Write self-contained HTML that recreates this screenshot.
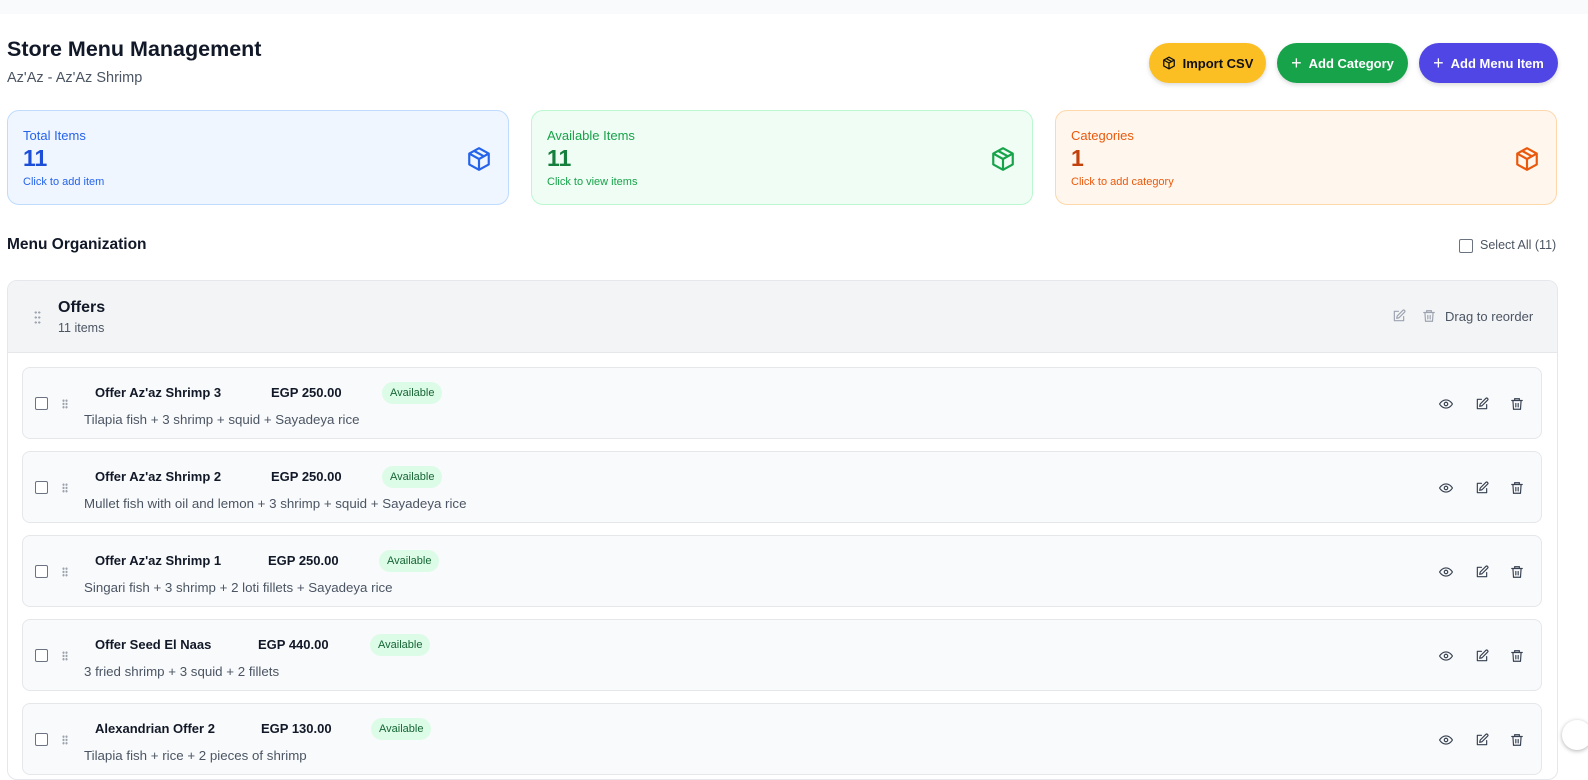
<!DOCTYPE html>
<html><head><meta charset="utf-8"><style>
*{box-sizing:border-box;margin:0;padding:0}
body{width:1588px;height:767px;overflow:hidden;background:#fff;font-family:"Liberation Sans",Arial,sans-serif;position:relative;color:#111827}
.abs{position:absolute}
.btn{position:absolute;top:43px;height:40px;border-radius:20px;font-size:13px;font-weight:bold;display:flex;align-items:center;justify-content:center;gap:7px;box-shadow:0 2px 5px rgba(0,0,0,.15)}
.card{position:absolute;top:110px;width:502px;height:95px;border-radius:12px;border:1px solid}
.card .t{position:absolute;left:15px;top:17px;font-size:13px}
.card .n{position:absolute;left:15px;top:34px;font-size:23px;font-weight:bold}
.card .s{position:absolute;left:15px;top:65px;font-size:11px}
.card svg{position:absolute;right:16px;top:35px}
.item{position:absolute;left:22px;width:1520px;height:72px;background:#f9fafb;border:1px solid #e5e7eb;border-radius:8px}
.cb{position:absolute;width:13px;height:13px;border:1.5px solid #6b7280;border-radius:2px;background:#fff}
.item .nm{position:absolute;top:17px;font-size:13px;font-weight:bold;color:#111827}
.item .pr{position:absolute;top:17px;font-size:13px;font-weight:bold;color:#111827}
.badge{position:absolute;top:14px;height:22px;padding:0 8px;border-radius:11px;background:#dcfce7;color:#166534;font-size:11px;line-height:22px}
.item .ds{position:absolute;left:61px;top:44px;font-size:13.3px;color:#4b5563}
.dots{position:absolute;width:6px;height:10px;background:radial-gradient(circle,#9ca3af 1px,transparent 1.3px) 0 0/3px 3.3px}
.ic{position:absolute;top:29px}
</style></head><body>
<div class="abs" style="left:0;top:0;width:1588px;height:14px;background:#f8fafc"></div>
<div class="abs" style="left:7px;top:37px;font-size:21.5px;font-weight:bold">Store Menu Management</div>
<div class="abs" style="left:7px;top:70px;font-size:14.5px;color:#4b5563">Az'Az - Az'Az Shrimp</div>

<div class="btn" style="left:1149px;width:117px;background:#fbbf24;color:#111">
<svg width="14" height="14" viewBox="0 0 24 24" fill="none" stroke="#111" stroke-width="2.2" stroke-linejoin="round"><path d="M12 2l9 5v10l-9 5-9-5V7z"/><path d="M3 7l9 5 9-5M12 12v10M7.5 4.5l9 5"/></svg>Import CSV</div>
<div class="btn" style="left:1277px;width:131px;background:#16a34a;color:#fff"><span style="font-size:18px;font-weight:normal">+</span>Add Category</div>
<div class="btn" style="left:1419px;width:139px;background:#4f46e5;color:#fff"><span style="font-size:18px;font-weight:normal">+</span>Add Menu Item</div>

<div class="card" style="left:7px;background:#eff6ff;border-color:#bfdbfe;color:#2563eb"><div class="t">Total Items</div><div class="n" style="color:#1d4ed8">11</div><div class="s">Click to add item</div>
<svg width="26" height="26" viewBox="0 0 24 24" fill="none" stroke="#2563eb" stroke-width="2" stroke-linejoin="round"><path d="M12 2l9 5v10l-9 5-9-5V7z"/><path d="M3 7l9 5 9-5M12 12v10M7.5 4.5l9 5"/></svg></div>
<div class="card" style="left:531px;background:#f0fdf4;border-color:#bbf7d0;color:#16a34a"><div class="t">Available Items</div><div class="n" style="color:#15803d">11</div><div class="s">Click to view items</div>
<svg width="26" height="26" viewBox="0 0 24 24" fill="none" stroke="#16a34a" stroke-width="2" stroke-linejoin="round"><path d="M12 2l9 5v10l-9 5-9-5V7z"/><path d="M3 7l9 5 9-5M12 12v10M7.5 4.5l9 5"/></svg></div>
<div class="card" style="left:1055px;background:#fff7ed;border-color:#fed7aa;color:#ea580c"><div class="t">Categories</div><div class="n" style="color:#c2410c">1</div><div class="s">Click to add category</div>
<svg width="26" height="26" viewBox="0 0 24 24" fill="none" stroke="#ea580c" stroke-width="2" stroke-linejoin="round"><path d="M12 2l9 5v10l-9 5-9-5V7z"/><path d="M3 7l9 5 9-5M12 12v10M7.5 4.5l9 5"/></svg></div>

<div class="abs" style="left:7px;top:236px;font-size:15.5px;font-weight:bold">Menu Organization</div>
<div class="cb" style="left:1459px;top:239px;width:14px;height:14px;border-color:#6b7280"></div>
<div class="abs" style="left:1480px;top:238px;font-size:12.5px;color:#4b5563">Select All (11)</div>

<div class="abs" style="left:7px;top:280px;width:1551px;height:500px;border:1px solid #e5e7eb;border-radius:10px;overflow:hidden">
<div style="height:72px;background:#f3f4f6;border-bottom:1px solid #e5e7eb;position:relative">
<div class="dots" style="left:26px;top:29px;width:7px;height:15px;background-size:3.5px 5px"></div>
<div class="abs" style="left:50px;top:18px;font-size:16px;font-weight:bold">Offers</div>
<div class="abs" style="left:50px;top:40px;font-size:12.5px;color:#4b5563">11 items</div>
<svg class="abs" style="left:1384px;top:28px" width="14" height="14" viewBox="0 0 24 24" fill="none" stroke="#9ca3af" stroke-width="2" stroke-linecap="round" stroke-linejoin="round"><path d="M11 4H4v16h16v-7"/><path d="M18.5 2.5a2.1 2.1 0 013 3L12 15l-4 1 1-4z"/></svg>
<svg class="abs" style="left:1414px;top:28px" width="14" height="14" viewBox="0 0 24 24" fill="none" stroke="#9ca3af" stroke-width="2" stroke-linecap="round"><path d="M3 6h18M8 6V3h8v3M5 6l1 15h12l1-15M10 11v6M14 11v6"/></svg>
<div class="abs" style="left:1437px;top:28px;font-size:13px;color:#4b5563">Drag to reorder</div>
</div>
</div>

<div class="item" style="top:367px"><div class="cb" style="left:12px;top:29px"></div><div class="dots" style="left:39px;top:31px"></div><div class="nm" style="left:72px">Offer Az'az Shrimp 3</div><div class="pr" style="left:248px">EGP 250.00</div><div class="badge" style="left:359px">Available</div><div class="ds">Tilapia fish + 3 shrimp + squid + Sayadeya rice</div>
<svg class="ic" style="left:1415px" width="16" height="14" viewBox="0 0 24 24" fill="none" stroke="#374151" stroke-width="2"><path d="M1 12s4-7 11-7 11 7 11 7-4 7-11 7S1 12 1 12z"/><circle cx="12" cy="12" r="3"/></svg>
<svg class="ic" style="left:1452px" width="14" height="14" viewBox="0 0 24 24" fill="none" stroke="#374151" stroke-width="2" stroke-linecap="round" stroke-linejoin="round"><path d="M11 4H4v16h16v-7"/><path d="M18.5 2.5a2.1 2.1 0 013 3L12 15l-4 1 1-4z"/></svg>
<svg class="ic" style="left:1487px" width="14" height="14" viewBox="0 0 24 24" fill="none" stroke="#374151" stroke-width="2" stroke-linecap="round"><path d="M3 6h18M8 6V3h8v3M5 6l1 15h12l1-15M10 11v6M14 11v6"/></svg></div>

<div class="item" style="top:451px"><div class="cb" style="left:12px;top:29px"></div><div class="dots" style="left:39px;top:31px"></div><div class="nm" style="left:72px">Offer Az'az Shrimp 2</div><div class="pr" style="left:248px">EGP 250.00</div><div class="badge" style="left:359px">Available</div><div class="ds">Mullet fish with oil and lemon + 3 shrimp + squid + Sayadeya rice</div>
<svg class="ic" style="left:1415px" width="16" height="14" viewBox="0 0 24 24" fill="none" stroke="#374151" stroke-width="2"><path d="M1 12s4-7 11-7 11 7 11 7-4 7-11 7S1 12 1 12z"/><circle cx="12" cy="12" r="3"/></svg>
<svg class="ic" style="left:1452px" width="14" height="14" viewBox="0 0 24 24" fill="none" stroke="#374151" stroke-width="2" stroke-linecap="round" stroke-linejoin="round"><path d="M11 4H4v16h16v-7"/><path d="M18.5 2.5a2.1 2.1 0 013 3L12 15l-4 1 1-4z"/></svg>
<svg class="ic" style="left:1487px" width="14" height="14" viewBox="0 0 24 24" fill="none" stroke="#374151" stroke-width="2" stroke-linecap="round"><path d="M3 6h18M8 6V3h8v3M5 6l1 15h12l1-15M10 11v6M14 11v6"/></svg></div>

<div class="item" style="top:535px"><div class="cb" style="left:12px;top:29px"></div><div class="dots" style="left:39px;top:31px"></div><div class="nm" style="left:72px">Offer Az'az Shrimp 1</div><div class="pr" style="left:245px">EGP 250.00</div><div class="badge" style="left:356px">Available</div><div class="ds">Singari fish + 3 shrimp + 2 loti fillets + Sayadeya rice</div>
<svg class="ic" style="left:1415px" width="16" height="14" viewBox="0 0 24 24" fill="none" stroke="#374151" stroke-width="2"><path d="M1 12s4-7 11-7 11 7 11 7-4 7-11 7S1 12 1 12z"/><circle cx="12" cy="12" r="3"/></svg>
<svg class="ic" style="left:1452px" width="14" height="14" viewBox="0 0 24 24" fill="none" stroke="#374151" stroke-width="2" stroke-linecap="round" stroke-linejoin="round"><path d="M11 4H4v16h16v-7"/><path d="M18.5 2.5a2.1 2.1 0 013 3L12 15l-4 1 1-4z"/></svg>
<svg class="ic" style="left:1487px" width="14" height="14" viewBox="0 0 24 24" fill="none" stroke="#374151" stroke-width="2" stroke-linecap="round"><path d="M3 6h18M8 6V3h8v3M5 6l1 15h12l1-15M10 11v6M14 11v6"/></svg></div>

<div class="item" style="top:619px"><div class="cb" style="left:12px;top:29px"></div><div class="dots" style="left:39px;top:31px"></div><div class="nm" style="left:72px">Offer Seed El Naas</div><div class="pr" style="left:235px">EGP 440.00</div><div class="badge" style="left:347px">Available</div><div class="ds">3 fried shrimp + 3 squid + 2 fillets</div>
<svg class="ic" style="left:1415px" width="16" height="14" viewBox="0 0 24 24" fill="none" stroke="#374151" stroke-width="2"><path d="M1 12s4-7 11-7 11 7 11 7-4 7-11 7S1 12 1 12z"/><circle cx="12" cy="12" r="3"/></svg>
<svg class="ic" style="left:1452px" width="14" height="14" viewBox="0 0 24 24" fill="none" stroke="#374151" stroke-width="2" stroke-linecap="round" stroke-linejoin="round"><path d="M11 4H4v16h16v-7"/><path d="M18.5 2.5a2.1 2.1 0 013 3L12 15l-4 1 1-4z"/></svg>
<svg class="ic" style="left:1487px" width="14" height="14" viewBox="0 0 24 24" fill="none" stroke="#374151" stroke-width="2" stroke-linecap="round"><path d="M3 6h18M8 6V3h8v3M5 6l1 15h12l1-15M10 11v6M14 11v6"/></svg></div>

<div class="item" style="top:703px"><div class="cb" style="left:12px;top:29px"></div><div class="dots" style="left:39px;top:31px"></div><div class="nm" style="left:72px">Alexandrian Offer 2</div><div class="pr" style="left:238px">EGP 130.00</div><div class="badge" style="left:348px">Available</div><div class="ds">Tilapia fish + rice + 2 pieces of shrimp</div>
<svg class="ic" style="left:1415px" width="16" height="14" viewBox="0 0 24 24" fill="none" stroke="#374151" stroke-width="2"><path d="M1 12s4-7 11-7 11 7 11 7-4 7-11 7S1 12 1 12z"/><circle cx="12" cy="12" r="3"/></svg>
<svg class="ic" style="left:1452px" width="14" height="14" viewBox="0 0 24 24" fill="none" stroke="#374151" stroke-width="2" stroke-linecap="round" stroke-linejoin="round"><path d="M11 4H4v16h16v-7"/><path d="M18.5 2.5a2.1 2.1 0 013 3L12 15l-4 1 1-4z"/></svg>
<svg class="ic" style="left:1487px" width="14" height="14" viewBox="0 0 24 24" fill="none" stroke="#374151" stroke-width="2" stroke-linecap="round"><path d="M3 6h18M8 6V3h8v3M5 6l1 15h12l1-15M10 11v6M14 11v6"/></svg></div>

<div class="abs" style="left:1562px;top:720px;width:30px;height:30px;border-radius:50%;background:#fff;box-shadow:0 1px 4px rgba(0,0,0,.3)"></div>
</body></html>
